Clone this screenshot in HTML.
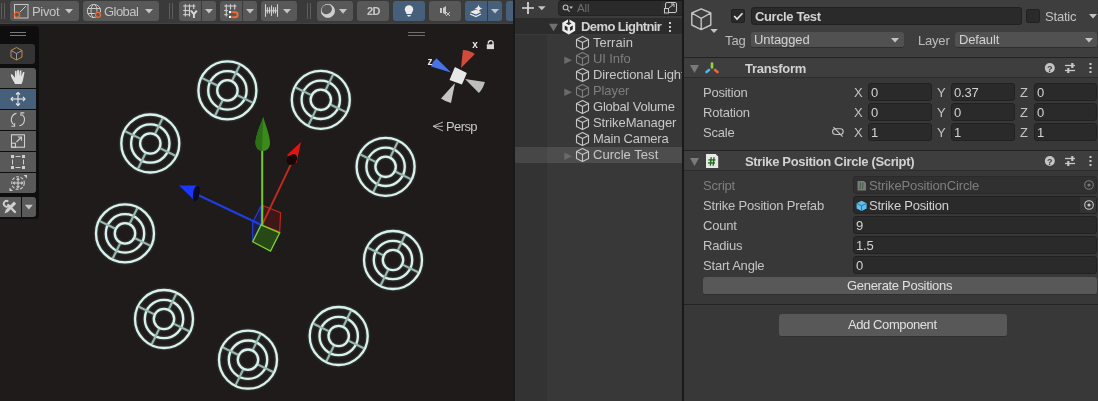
<!DOCTYPE html>
<html><head><meta charset="utf-8">
<style>
*{box-sizing:border-box;margin:0;padding:0}
html,body{width:1098px;height:401px;overflow:hidden;background:#191919;font-family:"Liberation Sans",sans-serif;font-size:13px;color:#c4c4c4}
.a{position:absolute}
.t{position:absolute;white-space:nowrap;line-height:1;will-change:transform}
#scene{left:0;top:0;width:513px;height:401px;background:#1e1b1a;overflow:hidden}
#stb{left:0;top:0;width:513px;height:24px;background:#3a3a3a;border-bottom:1px solid #414141}
.btn{position:absolute;top:1px;height:20px;background:#585858;border-radius:3px}
.blue{background:#46607c}
#hier{left:515px;top:0;width:167px;height:401px;background:#383838;overflow:hidden}
#insp{left:684px;top:0;width:414px;height:401px;background:#383838;overflow:hidden}
svg.a{will-change:transform}
.fld{position:absolute;background:#2a2a2a;border:1px solid #212121;border-radius:3px}
</style></head><body>
<div id="scene" class="a">
<svg class="a" style="left:0;top:0" width="513" height="401" viewBox="0 0 513 401">
<defs><style>.rg{fill:none;stroke:#d8f3ee;stroke-width:2.3}.sp{stroke:#98b9b3;stroke-width:2.1}</style>
<filter id="gl" x="-10%" y="-10%" width="120%" height="120%"><feGaussianBlur stdDeviation="1.2"/></filter></defs>
<g filter="url(#gl)" opacity="0.35"><g transform="translate(227.4,90.4)"><circle r="29" class="rg"/><circle r="19.2" class="rg"/><circle r="10.2" class="rg"/><line x1="4.91" y1="-10.07" x2="12.27" y2="-25.17" class="sp"/><line x1="10.07" y1="4.91" x2="25.17" y2="12.27" class="sp"/><line x1="-4.91" y1="10.07" x2="-12.27" y2="25.17" class="sp"/><line x1="-10.07" y1="-4.91" x2="-25.17" y2="-12.27" class="sp"/></g><g transform="translate(320.8,99.8)"><circle r="29" class="rg"/><circle r="19.2" class="rg"/><circle r="10.2" class="rg"/><line x1="4.91" y1="-10.07" x2="12.27" y2="-25.17" class="sp"/><line x1="10.07" y1="4.91" x2="25.17" y2="12.27" class="sp"/><line x1="-4.91" y1="10.07" x2="-12.27" y2="25.17" class="sp"/><line x1="-10.07" y1="-4.91" x2="-25.17" y2="-12.27" class="sp"/></g><g transform="translate(150.3,143.5)"><circle r="29" class="rg"/><circle r="19.2" class="rg"/><circle r="10.2" class="rg"/><line x1="4.91" y1="-10.07" x2="12.27" y2="-25.17" class="sp"/><line x1="10.07" y1="4.91" x2="25.17" y2="12.27" class="sp"/><line x1="-4.91" y1="10.07" x2="-12.27" y2="25.17" class="sp"/><line x1="-10.07" y1="-4.91" x2="-25.17" y2="-12.27" class="sp"/></g><g transform="translate(385.6,166.8)"><circle r="29" class="rg"/><circle r="19.2" class="rg"/><circle r="10.2" class="rg"/><line x1="4.91" y1="-10.07" x2="12.27" y2="-25.17" class="sp"/><line x1="10.07" y1="4.91" x2="25.17" y2="12.27" class="sp"/><line x1="-4.91" y1="10.07" x2="-12.27" y2="25.17" class="sp"/><line x1="-10.07" y1="-4.91" x2="-25.17" y2="-12.27" class="sp"/></g><g transform="translate(125,233.4)"><circle r="29" class="rg"/><circle r="19.2" class="rg"/><circle r="10.2" class="rg"/><line x1="4.91" y1="-10.07" x2="12.27" y2="-25.17" class="sp"/><line x1="10.07" y1="4.91" x2="25.17" y2="12.27" class="sp"/><line x1="-4.91" y1="10.07" x2="-12.27" y2="25.17" class="sp"/><line x1="-10.07" y1="-4.91" x2="-25.17" y2="-12.27" class="sp"/></g><g transform="translate(393,260)"><circle r="29" class="rg"/><circle r="19.2" class="rg"/><circle r="10.2" class="rg"/><line x1="4.91" y1="-10.07" x2="12.27" y2="-25.17" class="sp"/><line x1="10.07" y1="4.91" x2="25.17" y2="12.27" class="sp"/><line x1="-4.91" y1="10.07" x2="-12.27" y2="25.17" class="sp"/><line x1="-10.07" y1="-4.91" x2="-25.17" y2="-12.27" class="sp"/></g><g transform="translate(164,319)"><circle r="29" class="rg"/><circle r="19.2" class="rg"/><circle r="10.2" class="rg"/><line x1="4.91" y1="-10.07" x2="12.27" y2="-25.17" class="sp"/><line x1="10.07" y1="4.91" x2="25.17" y2="12.27" class="sp"/><line x1="-4.91" y1="10.07" x2="-12.27" y2="25.17" class="sp"/><line x1="-10.07" y1="-4.91" x2="-25.17" y2="-12.27" class="sp"/></g><g transform="translate(338.7,336)"><circle r="29" class="rg"/><circle r="19.2" class="rg"/><circle r="10.2" class="rg"/><line x1="4.91" y1="-10.07" x2="12.27" y2="-25.17" class="sp"/><line x1="10.07" y1="4.91" x2="25.17" y2="12.27" class="sp"/><line x1="-4.91" y1="10.07" x2="-12.27" y2="25.17" class="sp"/><line x1="-10.07" y1="-4.91" x2="-25.17" y2="-12.27" class="sp"/></g><g transform="translate(248,359.7)"><circle r="29" class="rg"/><circle r="19.2" class="rg"/><circle r="10.2" class="rg"/><line x1="4.91" y1="-10.07" x2="12.27" y2="-25.17" class="sp"/><line x1="10.07" y1="4.91" x2="25.17" y2="12.27" class="sp"/><line x1="-4.91" y1="10.07" x2="-12.27" y2="25.17" class="sp"/><line x1="-10.07" y1="-4.91" x2="-25.17" y2="-12.27" class="sp"/></g></g>
<g><g transform="translate(227.4,90.4)"><circle r="29" class="rg"/><circle r="19.2" class="rg"/><circle r="10.2" class="rg"/><line x1="4.91" y1="-10.07" x2="12.27" y2="-25.17" class="sp"/><line x1="10.07" y1="4.91" x2="25.17" y2="12.27" class="sp"/><line x1="-4.91" y1="10.07" x2="-12.27" y2="25.17" class="sp"/><line x1="-10.07" y1="-4.91" x2="-25.17" y2="-12.27" class="sp"/></g><g transform="translate(320.8,99.8)"><circle r="29" class="rg"/><circle r="19.2" class="rg"/><circle r="10.2" class="rg"/><line x1="4.91" y1="-10.07" x2="12.27" y2="-25.17" class="sp"/><line x1="10.07" y1="4.91" x2="25.17" y2="12.27" class="sp"/><line x1="-4.91" y1="10.07" x2="-12.27" y2="25.17" class="sp"/><line x1="-10.07" y1="-4.91" x2="-25.17" y2="-12.27" class="sp"/></g><g transform="translate(150.3,143.5)"><circle r="29" class="rg"/><circle r="19.2" class="rg"/><circle r="10.2" class="rg"/><line x1="4.91" y1="-10.07" x2="12.27" y2="-25.17" class="sp"/><line x1="10.07" y1="4.91" x2="25.17" y2="12.27" class="sp"/><line x1="-4.91" y1="10.07" x2="-12.27" y2="25.17" class="sp"/><line x1="-10.07" y1="-4.91" x2="-25.17" y2="-12.27" class="sp"/></g><g transform="translate(385.6,166.8)"><circle r="29" class="rg"/><circle r="19.2" class="rg"/><circle r="10.2" class="rg"/><line x1="4.91" y1="-10.07" x2="12.27" y2="-25.17" class="sp"/><line x1="10.07" y1="4.91" x2="25.17" y2="12.27" class="sp"/><line x1="-4.91" y1="10.07" x2="-12.27" y2="25.17" class="sp"/><line x1="-10.07" y1="-4.91" x2="-25.17" y2="-12.27" class="sp"/></g><g transform="translate(125,233.4)"><circle r="29" class="rg"/><circle r="19.2" class="rg"/><circle r="10.2" class="rg"/><line x1="4.91" y1="-10.07" x2="12.27" y2="-25.17" class="sp"/><line x1="10.07" y1="4.91" x2="25.17" y2="12.27" class="sp"/><line x1="-4.91" y1="10.07" x2="-12.27" y2="25.17" class="sp"/><line x1="-10.07" y1="-4.91" x2="-25.17" y2="-12.27" class="sp"/></g><g transform="translate(393,260)"><circle r="29" class="rg"/><circle r="19.2" class="rg"/><circle r="10.2" class="rg"/><line x1="4.91" y1="-10.07" x2="12.27" y2="-25.17" class="sp"/><line x1="10.07" y1="4.91" x2="25.17" y2="12.27" class="sp"/><line x1="-4.91" y1="10.07" x2="-12.27" y2="25.17" class="sp"/><line x1="-10.07" y1="-4.91" x2="-25.17" y2="-12.27" class="sp"/></g><g transform="translate(164,319)"><circle r="29" class="rg"/><circle r="19.2" class="rg"/><circle r="10.2" class="rg"/><line x1="4.91" y1="-10.07" x2="12.27" y2="-25.17" class="sp"/><line x1="10.07" y1="4.91" x2="25.17" y2="12.27" class="sp"/><line x1="-4.91" y1="10.07" x2="-12.27" y2="25.17" class="sp"/><line x1="-10.07" y1="-4.91" x2="-25.17" y2="-12.27" class="sp"/></g><g transform="translate(338.7,336)"><circle r="29" class="rg"/><circle r="19.2" class="rg"/><circle r="10.2" class="rg"/><line x1="4.91" y1="-10.07" x2="12.27" y2="-25.17" class="sp"/><line x1="10.07" y1="4.91" x2="25.17" y2="12.27" class="sp"/><line x1="-4.91" y1="10.07" x2="-12.27" y2="25.17" class="sp"/><line x1="-10.07" y1="-4.91" x2="-25.17" y2="-12.27" class="sp"/></g><g transform="translate(248,359.7)"><circle r="29" class="rg"/><circle r="19.2" class="rg"/><circle r="10.2" class="rg"/><line x1="4.91" y1="-10.07" x2="12.27" y2="-25.17" class="sp"/><line x1="10.07" y1="4.91" x2="25.17" y2="12.27" class="sp"/><line x1="-4.91" y1="10.07" x2="-12.27" y2="25.17" class="sp"/><line x1="-10.07" y1="-4.91" x2="-25.17" y2="-12.27" class="sp"/></g></g>
<path d="M261.2 205.7 L261.2 224.9 L252.7 241.8 L252.7 222.3 Z" fill="rgba(30,40,140,0.35)" stroke="#2a3cd8" stroke-width="1.2"/>
<path d="M263.2 205.7 L280.6 212.7 L279.7 231.9 L261.4 224.9 Z" fill="rgba(120,20,20,0.35)" stroke="#c42222" stroke-width="1.2"/>
<line x1="261.5" y1="225" x2="198" y2="195" stroke="#1e3ee0" stroke-width="2.3"/>
<line x1="262" y1="225" x2="292" y2="162" stroke="#c52a1e" stroke-width="1.8"/>
<line x1="262.2" y1="225" x2="262.2" y2="150" stroke="#74cc26" stroke-width="2"/>
<path d="M261.1 224.9 L279.7 232.8 L270.5 251.1 L252.7 241.8 Z" fill="rgba(50,110,20,0.55)" stroke="#7cd22c" stroke-width="1.3"/>
<path d="M263.2 117 C266 126 270 136 270 143 C270 148 267 151 263 151 C259 151 255.5 148 255.5 143 C255.5 136 260 126 263.2 117 Z" fill="#3a8a1c"/>
<path d="M263.2 117 C260 126 255.5 136 255.5 143 C255.5 148 259 151 262 151 Z" fill="#2d6f16"/>
<path d="M301 142 L296.5 163 L287 155 Z" fill="#e01414"/>
<ellipse cx="292" cy="159.5" rx="4.6" ry="6" transform="rotate(40 292 159.5)" fill="#1a0606"/>
<path d="M179 185.4 L198.5 185.5 L195 201 Z" fill="#1838ff"/>
<ellipse cx="196.3" cy="193.3" rx="3.2" ry="8" transform="rotate(10 196.3 193.3)" fill="#070a24"/>
<path d="M461 68 L462.9 50 Q469 50 474.9 54 Z" fill="#d24a3a"/>
<path d="M451 72.5 L436.5 58.3 Q432.5 61.5 431 66.5 Z" fill="#4a72e6"/>
<path d="M465 79 L484.9 82 Q483 89 478.9 92.9 Z" fill="#bdbdbd"/>
<path d="M455 83 L441 98.5 Q446 102 451 102.9 Z" fill="#c4c4c4"/>
<path d="M454.9 66.9 L466.9 72.9 L461.9 84.5 L449.5 79.9 Z" fill="#e8e8e8"/>
<text x="472.2" y="48" font-family="Liberation Sans" font-weight="bold" font-size="10" fill="#e8e8e8">x</text>
<text x="427.4" y="64.6" font-family="Liberation Sans" font-weight="bold" font-size="10" fill="#e8e8e8">z</text>
<path d="M488.4 43.6 A2.4 2.4 0 0 1 493.1 42.6 L493.1 45" fill="none" stroke="#d8d8d8" stroke-width="1.4"/>
<rect x="486.8" y="44.3" width="7.2" height="4.8" fill="#d8d8d8"/>
<path d="M443 122 L433 126.3 L443 131 M433 126.3 L443 126.3" fill="none" stroke="#c8c8c8" stroke-width="0.9"/>
<line x1="408" y1="32.5" x2="425" y2="32.5" stroke="#6e6e6e" stroke-width="1"/>
<line x1="408" y1="35.5" x2="425" y2="35.5" stroke="#6e6e6e" stroke-width="1"/>
</svg>
<div class="t" style="left:446.00px;top:119.80px;font-size:13px;letter-spacing:-0.6px;color:#c8c8c8;">Persp</div>
<div class="a" style="left:0;top:26px;width:39px;height:193px;background:#0e0e0e;border-radius:0 4px 4px 0"></div>
<div class="a" style="left:10px;top:32px;width:16px;height:1px;background:#7a7a7a"></div>
<div class="a" style="left:10px;top:35px;width:16px;height:1px;background:#7a7a7a"></div>
<div class="a" style="left:0;top:44px;width:35px;height:20px;background:#343434;border-radius:0 3px 3px 0"></div>
<div class="a" style="left:0;top:68px;width:36px;height:20px;background:#595959;border-radius:0 3px 0 0"></div>
<div class="a" style="left:0;top:89px;width:36px;height:20px;background:#46607c"></div>
<div class="a" style="left:0;top:110px;width:36px;height:20px;background:#595959"></div>
<div class="a" style="left:0;top:131px;width:36px;height:20px;background:#595959"></div>
<div class="a" style="left:0;top:152px;width:36px;height:20px;background:#595959"></div>
<div class="a" style="left:0;top:173px;width:36px;height:20px;background:#595959;border-radius:0 0 3px 0"></div>
<div class="a" style="left:0;top:197px;width:21px;height:20px;background:#595959"></div>
<div class="a" style="left:22px;top:197px;width:14px;height:20px;background:#595959;border-radius:0 3px 3px 0"></div>
<svg class="a" style="left:0;top:0" width="40" height="220" viewBox="0 0 40 220">
  <path d="M16.5 47.5 L22 50.5 L22 57 L16.5 60 L11 57 L11 50.5 Z" fill="none" stroke="#c28a4a" stroke-width="1"/>
  <path d="M11 50.5 L16.5 53.5 L22 50.5 M16.5 53.5 L16.5 60" fill="none" stroke="#9a9a9a" stroke-width="1"/>
  <g transform="translate(10.8 69.5) scale(1.3 1.05) translate(-10.3 -69.6)">
  <path d="M13 82 C11.5 79 10.5 76.5 10.3 75 C10.2 74 11.3 73.8 11.8 74.8 L13.5 77.5 L13.5 71.5 C13.5 70.5 14.8 70.5 14.8 71.5 L14.9 76 L15.2 70.6 C15.2 69.6 16.6 69.6 16.6 70.6 L16.7 76 L17.2 71 C17.3 70 18.6 70.1 18.5 71.1 L18.4 76.3 L19.5 72.5 C19.7 71.6 21 71.9 20.8 72.8 L19.8 79 C19.5 81 19 82.5 18.5 83.5 L13.5 83.5 Z" fill="#e0e0e0"/>
  </g>
  <g stroke="#e8e8e8" stroke-width="1.1" fill="none">
    <line x1="18" y1="92.5" x2="18" y2="105.5"/><line x1="11" y1="99" x2="25" y2="99"/>
    <path d="M16 94.5 L18 92.5 L20 94.5 M16 103.5 L18 105.5 L20 103.5 M13 97 L11 99 L13 101 M23 97 L25 99 L23 101"/>
  </g>
  <g stroke="#cfcfcf" stroke-width="1.1" fill="none">
    <path d="M16.5 113.4 A6.3 6.3 0 0 0 13.8 124.6"/><path d="M19.3 125.8 A6.3 6.3 0 0 0 22 114.6"/>
    <path d="M11.3 126.3 L14.6 126.3 L14.6 123.2"/><path d="M24.3 112.9 L21 112.9 L21 116"/>
  </g>
  <g stroke="#cfcfcf" stroke-width="1.1" fill="none">
    <rect x="11.5" y="134.8" width="13" height="12.4"/>
    <rect x="11.5" y="143.2" width="4" height="4"/>
    <path d="M16.5 142 L21.5 137 M17.8 137 L21.5 137 L21.5 140.7"/>
  </g>
  <g fill="#cfcfcf">
    <rect x="11" y="155" width="3" height="3"/><rect x="22" y="155" width="3" height="3"/>
    <rect x="11" y="166" width="3" height="3"/><rect x="22" y="166" width="3" height="3"/>
  </g>
  <g stroke="#cfcfcf" stroke-width="1" fill="none">
    <line x1="12.5" y1="159.5" x2="12.5" y2="164.5"/><line x1="23.5" y1="159.5" x2="23.5" y2="164.5"/>
    <line x1="15.5" y1="156.5" x2="20.5" y2="156.5"/><line x1="15.5" y1="167.5" x2="20.5" y2="167.5"/>
  </g>
  <g stroke="#cfcfcf" stroke-width="1.1" fill="none">
    <circle cx="18" cy="183" r="6.3" stroke-dasharray="3 1.5"/>
    <line x1="18" y1="178.5" x2="18" y2="187.5"/><line x1="13.5" y1="183" x2="22.5" y2="183"/>
    <path d="M16.6 179.8 L18 178.4 L19.4 179.8 M16.6 186.2 L18 187.6 L19.4 186.2 M14.8 181.6 L13.4 183 L14.8 184.4 M21.2 181.6 L22.6 183 L21.2 184.4"/>
  </g>
  <path d="M23.5 175 L27 175 L27 178.5 Z M9.5 191 L13 191 L9.5 187.5 Z" fill="#cfcfcf"/>
  <path d="M8.3 201.4 A2.9 2.9 0 1 0 8.9 205.6" fill="none" stroke="#d0d0d0" stroke-width="1.8"/>
  <line x1="8.2" y1="205.2" x2="15" y2="212" stroke="#d0d0d0" stroke-width="2.4" stroke-linecap="round"/>
  <path d="M14 201.6 L16.2 203.8 L8 212 L4.6 213.4 L5.8 209.8 Z" fill="#d0d0d0"/>
  <path d="M24.8 204.7 L32.9 204.7 L28.85 209.5 Z" fill="#c4c4c4"/>
</svg>
<div id="stb" class="a">
    <div class="a" style="left:1px;top:3px;width:1px;height:16px;background:#5e5e5e"></div>
    <div class="a" style="left:4px;top:3px;width:1px;height:16px;background:#5e5e5e"></div>
    <div class="btn" style="left:10px;width:69px"></div>
    <svg class="a" style="left:10px;top:0" width="69" height="22" viewBox="10 0 69 22">
      <rect x="14.5" y="4.5" width="13.5" height="13.5" fill="none" stroke="#c8c8c8" stroke-width="1"/>
      <line x1="20" y1="12" x2="26" y2="6" stroke="#c8c8c8" stroke-width="1"/>
      <circle cx="17" cy="14.8" r="2.6" fill="#585858" stroke="#f26b2b" stroke-width="1.3"/>
      <path d="M65 9 L73 9 L69 13.5 Z" fill="#c4c4c4"/>
    </svg>
    <div class="t" style="left:32.00px;top:4.90px;font-size:13px;letter-spacing:-0.32px;color:#c4c4c4;">Pivot</div>
    <div class="btn" style="left:83px;width:76px"></div>
    <svg class="a" style="left:83px;top:0" width="76" height="22" viewBox="83 0 76 22">
      <circle cx="94" cy="11" r="6.6" fill="none" stroke="#c8c8c8" stroke-width="1"/>
      <ellipse cx="94" cy="11" rx="3" ry="6.6" fill="none" stroke="#c8c8c8" stroke-width="1"/>
      <line x1="87.5" y1="8.5" x2="100.5" y2="8.5" stroke="#c8c8c8" stroke-width="1"/>
      <line x1="87.5" y1="13.5" x2="100.5" y2="13.5" stroke="#c8c8c8" stroke-width="1"/>
      <circle cx="98" cy="14.8" r="3.4" fill="#585858"/>
      <circle cx="98" cy="14.8" r="2.5" fill="#585858" stroke="#f26b2b" stroke-width="1.3"/>
      <path d="M145 9 L153 9 L149 13.5 Z" fill="#c4c4c4"/>
    </svg>
    <div class="t" style="left:104.00px;top:4.90px;font-size:13px;letter-spacing:-0.54px;color:#c4c4c4;">Global</div>
    <div class="a" style="left:169px;top:3px;width:1px;height:16px;background:#5e5e5e"></div>
    <div class="a" style="left:172px;top:3px;width:1px;height:16px;background:#5e5e5e"></div>
    <div class="btn" style="left:179px;width:37px"></div>
    <div class="a" style="left:201px;top:1px;width:1px;height:20px;background:#3a3a3a"></div>
    <svg class="a" style="left:179px;top:0" width="37" height="22" viewBox="179 0 37 22">
      <g stroke="#d0d0d0" stroke-width="1.1" fill="none">
        <line x1="185.3" y1="4.2" x2="185.3" y2="16.5"/>
        <line x1="189.5" y1="4.2" x2="189.5" y2="16.5"/>
        <line x1="193.7" y1="4.2" x2="193.7" y2="9"/>
        <line x1="183.2" y1="6" x2="195.4" y2="6"/>
        <line x1="183.2" y1="10.5" x2="190.3" y2="10.5"/>
        <line x1="183.2" y1="14.7" x2="190.3" y2="14.7"/>
      </g>
      <path d="M191 10.6 L193.9 14.2 L196.8 10.6 M193.9 14 L193.9 18" fill="none" stroke="#d8d8d8" stroke-width="1.9"/>
      <path d="M205 9 L213 9 L209 13.5 Z" fill="#c4c4c4"/>
    </svg>
    <div class="btn" style="left:220px;width:37px"></div>
    <div class="a" style="left:242px;top:1px;width:1px;height:20px;background:#3a3a3a"></div>
    <svg class="a" style="left:220px;top:0" width="37" height="22" viewBox="220 0 37 22">
      <g stroke="#d0d0d0" stroke-width="1.1" fill="none">
        <line x1="226.3" y1="4.2" x2="226.3" y2="16.5"/>
        <line x1="230.5" y1="4.2" x2="230.5" y2="9.5"/>
        <line x1="234.7" y1="4.2" x2="234.7" y2="9.5"/>
        <line x1="224.2" y1="6" x2="236.4" y2="6"/>
        <line x1="224.2" y1="10.5" x2="227.8" y2="10.5"/>
        <line x1="224.2" y1="14.7" x2="227.8" y2="14.7"/>
      </g>
      <rect x="229" y="11" width="2.2" height="2.1" fill="#fff"/>
      <rect x="229" y="15.9" width="2.2" height="2.1" fill="#fff"/>
      <path d="M232.2 12.3 L235.2 12.3 A2.45 2.45 0 0 1 235.2 17.2 L232.2 17.2" fill="none" stroke="#f26b2b" stroke-width="2"/>
      <path d="M246 9 L254 9 L250 13.5 Z" fill="#c4c4c4"/>
    </svg>
    <div class="btn" style="left:261px;width:36px"></div>
    <svg class="a" style="left:261px;top:0" width="36" height="22" viewBox="261 0 36 22">
      <g stroke="#d0d0d0" stroke-width="1.1" fill="none">
        <line x1="265.5" y1="4.2" x2="265.5" y2="16.8"/>
        <line x1="277.5" y1="4.2" x2="277.5" y2="16.8"/>
        <line x1="265.5" y1="10.8" x2="277.5" y2="10.8"/>
        <line x1="267.4" y1="7.2" x2="267.4" y2="13.5"/>
        <line x1="269.5" y1="7.2" x2="269.5" y2="13.5"/>
        <line x1="271.5" y1="5.4" x2="271.5" y2="15.9"/>
        <line x1="273.5" y1="7.2" x2="273.5" y2="13.5"/>
        <line x1="275.5" y1="7.2" x2="275.5" y2="13.5"/>
      </g>
      <path d="M283 9 L291 9 L287 13.5 Z" fill="#c4c4c4"/>
    </svg>
    <div class="a" style="left:307px;top:3px;width:1px;height:16px;background:#5e5e5e"></div>
    <div class="a" style="left:310px;top:3px;width:1px;height:16px;background:#5e5e5e"></div>
    <div class="btn" style="left:317px;width:36px"></div>
    <svg class="a" style="left:317px;top:0" width="36" height="22" viewBox="317 0 36 22">
      <circle cx="327.9" cy="10.9" r="6.9" fill="#cfcfcf"/>
      <circle cx="327.9" cy="10.9" r="6.3" fill="none" stroke="#cfcfcf" stroke-width="1"/>
      <ellipse cx="326.8" cy="9.4" rx="5.3" ry="4.6" transform="rotate(-25 326.8 9.4)" fill="#585858"/>
      <path d="M339 9 L347 9 L343 13.8 Z" fill="#c4c4c4"/>
    </svg>
    <div class="btn" style="left:357px;width:32px"></div>
    <div class="t" style="left:366.60px;top:5.59px;font-size:11px;font-weight:bold;letter-spacing:-0.7px;color:#c8c8c8;">2D</div>
    <div class="btn blue" style="left:393px;width:32px"></div>
    <svg class="a" style="left:393px;top:0" width="32" height="22" viewBox="393 0 32 22">
      <circle cx="409" cy="9.5" r="4.2" fill="#ececec"/>
      <path d="M406 12 L412 12 L411.5 14 L406.5 14 Z" fill="#ececec"/>
      <path d="M407 15 L411 15 L410 16.5 L408 16.5 Z" fill="#ececec"/>
    </svg>
    <div class="btn" style="left:429px;width:32px"></div>
    <svg class="a" style="left:429px;top:0" width="32" height="22" viewBox="429 0 32 22">
      <rect x="440" y="8" width="2" height="5" fill="#c8c8c8"/>
      <path d="M443 8 L446 6 L446 15 L443 13 Z" fill="#c8c8c8"/>
      <path d="M446 12 L450 16 M450 12 L446 16" stroke="#c8c8c8" stroke-width="1"/>
    </svg>
    <div class="btn blue" style="left:465px;width:37px"></div>
    <div class="a" style="left:487px;top:1px;width:1px;height:20px;background:#3a3a3a"></div>
    <svg class="a" style="left:465px;top:0" width="37" height="22" viewBox="465 0 37 22">
      <path d="M470 12 L476 9.5 L481 12 L476 14.5 Z" fill="#ececec"/>
      <path d="M470 14 L476 16.5 L481 14" fill="none" stroke="#ececec" stroke-width="1.3"/>
      <path d="M478.5 4.5 Q479 8 482.5 8.5 Q479 9 478.5 12.5 Q478 9 474.5 8.5 Q478 8 478.5 4.5 Z" fill="#ececec"/>
      <path d="M491 9 L499 9 L495 13.5 Z" fill="#c4c4c4"/>
    </svg>
    <div class="btn blue" style="left:506px;width:20px"></div>
  </div>
</div>
<div id="hier" class="a">

  <div class="a" style="left:0;top:0;width:167px;height:18px;background:#3c3c3c"></div>
  <div class="a" style="left:0;top:18px;width:167px;height:16px;background:#2c2c2c"></div>
  <div class="a" style="left:0;top:34px;width:167px;height:1px;background:#3a3a3a"></div>
  <div class="a" style="left:0;top:35px;width:32px;height:366px;background:#333333"></div>
  <div class="a" style="left:0;top:147px;width:32px;height:16px;background:#474747"></div>
  <div class="a" style="left:32px;top:147px;width:135px;height:16px;background:#4d4d4d"></div>
  <div class="fld" style="left:43px;top:0px;width:135px;height:16px;background:#2a2a2a;border-color:#171717 #232323 #232323 #232323;border-radius:4px"></div>
  <div class="a" style="left:146px;top:1px;width:17px;height:14px;background:#2e2e2e;border-radius:0 4px 4px 0"></div>
<div class="t" style="left:62.30px;top:2.57px;font-size:11.5px;letter-spacing:-0.1px;color:#6e6e6e;">All</div><div class="t" style="left:78.40px;top:36.10px;font-size:13px;letter-spacing:0.020000000000000004px;color:#c8c8c8;">Terrain</div><div class="t" style="left:78.40px;top:52.10px;font-size:13px;letter-spacing:-0.1px;color:#7e7e7e;">UI Info</div><div class="t" style="left:78.40px;top:68.10px;font-size:13px;letter-spacing:-0.1px;color:#c8c8c8;">Directional Light</div><div class="t" style="left:78.40px;top:84.10px;font-size:13px;letter-spacing:-0.1px;color:#7e7e7e;">Player</div><div class="t" style="left:78.40px;top:100.10px;font-size:13px;letter-spacing:-0.22px;color:#c8c8c8;">Global Volume</div><div class="t" style="left:78.40px;top:116.10px;font-size:13px;letter-spacing:-0.1px;color:#c8c8c8;">StrikeManager</div><div class="t" style="left:78.40px;top:132.10px;font-size:13px;letter-spacing:-0.24000000000000002px;color:#c8c8c8;">Main Camera</div><div class="t" style="left:78.40px;top:148.10px;font-size:13px;letter-spacing:0.05px;color:#c8c8c8;">Curcle Test</div><svg class="a" style="left:0;top:0" width="167" height="170" viewBox="515 0 167 170"><path d="M528 2 L528 14 M522 8 L534 8" stroke="#dcdcdc" stroke-width="1.7"/><path d="M538 6.2 L545.6 6.2 L541.8 10.2 Z" fill="#c4c4c4"/><circle cx="565.6" cy="7.4" r="2.4" fill="none" stroke="#bdbdbd" stroke-width="1.1"/><path d="M567.4 9.3 L569.6 11.6" stroke="#bdbdbd" stroke-width="1.2"/><path d="M569.3 6.6 L573 6.6 L571.15 9 Z" fill="#bdbdbd"/><rect x="665.5" y="2.5" width="11" height="10" rx="1.5" fill="none" stroke="#c8c8c8" stroke-width="1"/><rect x="664.5" y="8.5" width="4" height="4.5" fill="#2e2e2e" stroke="#c8c8c8" stroke-width="1"/><path d="M669 8 L674 4 M671 4 L674 4 L674 7" fill="none" stroke="#c8c8c8" stroke-width="1"/><path d="M549 23.7 L558 23.7 L553.5 31.2 Z" fill="#707070"/><path d="M568.75 20.5 L574 23.5 L574 30 L568.75 33 L563.5 30 L563.5 23.5 Z M563.5 23.5 L568.75 26.3 L574 23.5 M568.75 26.3 L568.75 33" fill="none" stroke="#ececec" stroke-width="2.4" stroke-linejoin="miter"/><path d="M568.75 19 L568.75 24.6" stroke="#2e2e2e" stroke-width="1.5"/><g fill="#cfcfcf"><rect x="669" y="22" width="2" height="2"/><rect x="669" y="26" width="2" height="2"/><rect x="669" y="30" width="2" height="2"/></g><path d="M582.5 36.5 L588.5 39.5 L588.5 46.5 L582.5 49.5 L576.5 46.5 L576.5 39.5 Z M576.5 39.5 L582.5 42.5 L588.5 39.5 M582.5 42.5 L582.5 49.5" fill="none" stroke="#c8c8c8" stroke-width="1.1" stroke-linejoin="round"/><path d="M582.5 52.5 L588.5 55.5 L588.5 62.5 L582.5 65.5 L576.5 62.5 L576.5 55.5 Z M576.5 55.5 L582.5 58.5 L588.5 55.5 M582.5 58.5 L582.5 65.5" fill="none" stroke="#7e7e7e" stroke-width="1.1" stroke-linejoin="round"/><path d="M564.3 56.5 L572 60.2 L564.3 63.9 Z" fill="#6a6a6a"/><path d="M582.5 68.5 L588.5 71.5 L588.5 78.5 L582.5 81.5 L576.5 78.5 L576.5 71.5 Z M576.5 71.5 L582.5 74.5 L588.5 71.5 M582.5 74.5 L582.5 81.5" fill="none" stroke="#c8c8c8" stroke-width="1.1" stroke-linejoin="round"/><path d="M582.5 84.5 L588.5 87.5 L588.5 94.5 L582.5 97.5 L576.5 94.5 L576.5 87.5 Z M576.5 87.5 L582.5 90.5 L588.5 87.5 M582.5 90.5 L582.5 97.5" fill="none" stroke="#7e7e7e" stroke-width="1.1" stroke-linejoin="round"/><path d="M564.3 88.5 L572 92.2 L564.3 95.9 Z" fill="#6a6a6a"/><path d="M582.5 100.5 L588.5 103.5 L588.5 110.5 L582.5 113.5 L576.5 110.5 L576.5 103.5 Z M576.5 103.5 L582.5 106.5 L588.5 103.5 M582.5 106.5 L582.5 113.5" fill="none" stroke="#c8c8c8" stroke-width="1.1" stroke-linejoin="round"/><path d="M582.5 116.5 L588.5 119.5 L588.5 126.5 L582.5 129.5 L576.5 126.5 L576.5 119.5 Z M576.5 119.5 L582.5 122.5 L588.5 119.5 M582.5 122.5 L582.5 129.5" fill="none" stroke="#c8c8c8" stroke-width="1.1" stroke-linejoin="round"/><path d="M582.5 132.5 L588.5 135.5 L588.5 142.5 L582.5 145.5 L576.5 142.5 L576.5 135.5 Z M576.5 135.5 L582.5 138.5 L588.5 135.5 M582.5 138.5 L582.5 145.5" fill="none" stroke="#c8c8c8" stroke-width="1.1" stroke-linejoin="round"/><path d="M582.5 148.5 L588.5 151.5 L588.5 158.5 L582.5 161.5 L576.5 158.5 L576.5 151.5 Z M576.5 151.5 L582.5 154.5 L588.5 151.5 M582.5 154.5 L582.5 161.5" fill="none" stroke="#c8c8c8" stroke-width="1.1" stroke-linejoin="round"/><path d="M564.3 152.5 L572 156.2 L564.3 159.9 Z" fill="#6a6a6a"/></svg><div class="t" style="left:65.60px;top:20.10px;font-size:13px;font-weight:bold;letter-spacing:-0.6px;color:#d2d2d2;">Demo Lightnir</div></div>
<div id="insp" class="a">
<div class="a" style="left:0;top:0;width:414px;height:57px;background:#3e3e3e"></div>
<div class="a" style="left:0;top:57px;width:414px;height:1px;background:#232323"></div>
<div class="a" style="left:0;top:58px;width:414px;height:20px;background:#3e3e3e;border-bottom:1px solid #2c2c2c"></div>
<div class="a" style="left:0;top:150px;width:414px;height:1px;background:#232323"></div>
<div class="a" style="left:0;top:151px;width:414px;height:20px;background:#3e3e3e;border-bottom:1px solid #2c2c2c"></div>
<div class="a" style="left:0;top:304px;width:414px;height:1px;background:#232323"></div>
<div class="fld" style="left:47px;top:9px;width:14px;height:14px;border-radius:2px"></div>
<div class="fld" style="left:67px;top:7px;width:271px;height:18px"></div>
<div class="t" style="left:70.50px;top:10.20px;font-size:13px;font-weight:bold;letter-spacing:-0.38px;color:#d2d2d2;">Curcle Test</div>
<div class="fld" style="left:342px;top:9px;width:14px;height:14px;border-radius:2px"></div>
<div class="t" style="left:360.60px;top:10.00px;font-size:13px;letter-spacing:-0.2px;color:#c4c4c4;">Static</div>
<div class="t" style="left:41.00px;top:33.85px;font-size:13px;letter-spacing:-0.12px;color:#bdbdbd;">Tag</div>
<div class="a" style="left:67px;top:32px;width:153px;height:16px;background:#515151;border-radius:3px;border-bottom:1px solid #2f2f2f"></div>
<div class="t" style="left:70.40px;top:32.90px;font-size:13px;letter-spacing:-0.11px;color:#d2d2d2;">Untagged</div>
<div class="t" style="left:234.40px;top:33.85px;font-size:13px;letter-spacing:-0.2px;color:#bdbdbd;">Layer</div>
<div class="a" style="left:271px;top:32px;width:142px;height:16px;background:#515151;border-radius:3px;border-bottom:1px solid #2f2f2f"></div>
<div class="t" style="left:274.60px;top:32.90px;font-size:13px;letter-spacing:-0.15px;color:#d2d2d2;">Default</div>
<div class="t" style="left:60.50px;top:61.90px;font-size:13px;font-weight:bold;letter-spacing:-0.29px;color:#d2d2d2;">Transform</div>
<div class="t" style="left:18.90px;top:86.00px;font-size:13px;letter-spacing:-0.23px;color:#c4c4c4;">Position</div>
<div class="t" style="left:170.20px;top:86.00px;font-size:13px;letter-spacing:0px;color:#c4c4c4;">X</div>
<div class="fld" style="left:184px;top:83px;width:64px;height:18px"></div>
<div class="t" style="left:187.30px;top:86.00px;font-size:13px;letter-spacing:-0.2px;color:#d2d2d2;">0</div>
<div class="t" style="left:253.20px;top:86.00px;font-size:13px;letter-spacing:0px;color:#c4c4c4;">Y</div>
<div class="fld" style="left:267px;top:83px;width:64px;height:18px"></div>
<div class="t" style="left:270.30px;top:86.00px;font-size:13px;letter-spacing:-0.2px;color:#d2d2d2;">0.37</div>
<div class="t" style="left:336.20px;top:86.00px;font-size:13px;letter-spacing:0px;color:#c4c4c4;">Z</div>
<div class="fld" style="left:350px;top:83px;width:63px;height:18px"></div>
<div class="t" style="left:353.30px;top:86.00px;font-size:13px;letter-spacing:-0.2px;color:#d2d2d2;">0</div>
<div class="t" style="left:18.90px;top:106.00px;font-size:13px;letter-spacing:-0.2px;color:#c4c4c4;">Rotation</div>
<div class="t" style="left:170.20px;top:106.00px;font-size:13px;letter-spacing:0px;color:#c4c4c4;">X</div>
<div class="fld" style="left:184px;top:103px;width:64px;height:18px"></div>
<div class="t" style="left:187.30px;top:106.00px;font-size:13px;letter-spacing:-0.2px;color:#d2d2d2;">0</div>
<div class="t" style="left:253.20px;top:106.00px;font-size:13px;letter-spacing:0px;color:#c4c4c4;">Y</div>
<div class="fld" style="left:267px;top:103px;width:64px;height:18px"></div>
<div class="t" style="left:270.30px;top:106.00px;font-size:13px;letter-spacing:-0.2px;color:#d2d2d2;">0</div>
<div class="t" style="left:336.20px;top:106.00px;font-size:13px;letter-spacing:0px;color:#c4c4c4;">Z</div>
<div class="fld" style="left:350px;top:103px;width:63px;height:18px"></div>
<div class="t" style="left:353.30px;top:106.00px;font-size:13px;letter-spacing:-0.2px;color:#d2d2d2;">0</div>
<div class="t" style="left:18.90px;top:126.00px;font-size:13px;letter-spacing:-0.2px;color:#c4c4c4;">Scale</div>
<div class="t" style="left:170.20px;top:126.00px;font-size:13px;letter-spacing:0px;color:#c4c4c4;">X</div>
<div class="fld" style="left:184px;top:123px;width:64px;height:18px"></div>
<div class="t" style="left:187.30px;top:126.00px;font-size:13px;letter-spacing:-0.2px;color:#d2d2d2;">1</div>
<div class="t" style="left:253.20px;top:126.00px;font-size:13px;letter-spacing:0px;color:#c4c4c4;">Y</div>
<div class="fld" style="left:267px;top:123px;width:64px;height:18px"></div>
<div class="t" style="left:270.30px;top:126.00px;font-size:13px;letter-spacing:-0.2px;color:#d2d2d2;">1</div>
<div class="t" style="left:336.20px;top:126.00px;font-size:13px;letter-spacing:0px;color:#c4c4c4;">Z</div>
<div class="fld" style="left:350px;top:123px;width:63px;height:18px"></div>
<div class="t" style="left:353.30px;top:126.00px;font-size:13px;letter-spacing:-0.2px;color:#d2d2d2;">1</div>
<div class="t" style="left:60.60px;top:155.10px;font-size:13px;font-weight:bold;letter-spacing:-0.345px;color:#d2d2d2;">Strike Position Circle (Script)</div>
<div class="t" style="left:18.90px;top:179.00px;font-size:13px;letter-spacing:-0.2px;color:#7f7f7f;">Script</div>
<div class="fld" style="left:169px;top:176px;width:244px;height:18px;background:#303030;border-color:#2a2a2a"></div>
<div class="t" style="left:185.40px;top:179.00px;font-size:13px;letter-spacing:-0.125px;color:#7f7f7f;">StrikePositionCircle</div>
<div class="t" style="left:18.90px;top:199.00px;font-size:13px;letter-spacing:-0.184px;color:#c4c4c4;">Strike Position Prefab</div>
<div class="fld" style="left:169px;top:196px;width:244px;height:18px"></div>
<div class="a" style="left:396px;top:197px;width:16px;height:16px;background:#333;border-radius:0 2px 2px 0"></div>
<div class="t" style="left:185.40px;top:199.00px;font-size:13px;letter-spacing:-0.22px;color:#d2d2d2;">Strike Position</div>
<div class="t" style="left:18.90px;top:219.00px;font-size:13px;letter-spacing:-0.2px;color:#c4c4c4;">Count</div>
<div class="fld" style="left:169px;top:216px;width:244px;height:18px"></div>
<div class="t" style="left:172.30px;top:219.00px;font-size:13px;letter-spacing:-0.2px;color:#d2d2d2;">9</div>
<div class="t" style="left:18.90px;top:239.00px;font-size:13px;letter-spacing:-0.2px;color:#c4c4c4;">Radius</div>
<div class="fld" style="left:169px;top:236px;width:244px;height:18px"></div>
<div class="t" style="left:172.30px;top:239.00px;font-size:13px;letter-spacing:-0.2px;color:#d2d2d2;">1.5</div>
<div class="t" style="left:18.90px;top:259.00px;font-size:13px;letter-spacing:-0.2px;color:#c4c4c4;">Start Angle</div>
<div class="fld" style="left:169px;top:256px;width:244px;height:18px"></div>
<div class="t" style="left:172.30px;top:259.00px;font-size:13px;letter-spacing:-0.2px;color:#d2d2d2;">0</div>
<div class="a" style="left:19px;top:277px;width:394px;height:18px;background:#585858;border-radius:3px;border-bottom:1px solid #2f2f2f"></div>
<div class="t" style="left:163.20px;top:279.30px;font-size:13px;letter-spacing:-0.3px;color:#e0e0e0;">Generate Positions</div>
<div class="a" style="left:95px;top:314px;width:228px;height:23px;background:#585858;border-radius:3px;border-bottom:1px solid #2f2f2f"></div>
<div class="t" style="left:164.20px;top:318.00px;font-size:13px;letter-spacing:-0.41px;color:#e0e0e0;">Add Component</div>
<svg class="a" style="left:0;top:0" width="414" height="401" viewBox="684 0 414 401"><path d="M701.2 8.8 L710.8 13 L710.8 25 L701.2 29.6 L691.8 25 L691.8 13 Z M691.8 13 L701.2 18.3 L710.8 13 M701.2 18.3 L701.2 29.6" fill="none" stroke="#c4c4c4" stroke-width="1.4" stroke-linejoin="round"/><path d="M710.3 29 L717.8 29 L714 33 Z" fill="#c4c4c4"/><path d="M734.2 16 L737 19 L742.5 13.2" fill="none" stroke="#e8e8e8" stroke-width="1.6"/><path d="M1089 14 L1097 14 L1093 18.5 Z" fill="#c4c4c4"/><path d="M891 38 L899 38 L895 42.5 Z" fill="#c4c4c4"/><path d="M1085 38 L1093 38 L1089 42.5 Z" fill="#c4c4c4"/><path d="M690 65 L699 65 L694.5 73 Z" fill="#7a7a7a"/><circle cx="1049.8" cy="68" r="5" fill="#c4c4c4"/><text x="1049.8" y="71.6" text-anchor="middle" font-family="Liberation Sans" font-weight="bold" font-size="9" fill="#3e3e3e">?</text><g stroke="#c8c8c8" stroke-width="1.3"><line x1="1065" y1="65.5" x2="1075" y2="65.5"/><line x1="1065" y1="70.5" x2="1075" y2="70.5"/></g><g fill="#c8c8c8"><rect x="1071.2" y="63" width="2.2" height="5"/><rect x="1067.2" y="68" width="2.2" height="5"/></g><g fill="#c8c8c8"><rect x="1089.5" y="63" width="2" height="2"/><rect x="1089.5" y="67" width="2" height="2"/><rect x="1089.5" y="71" width="2" height="2"/></g><path d="M690 158 L699 158 L694.5 166 Z" fill="#7a7a7a"/><circle cx="1049.8" cy="161" r="5" fill="#c4c4c4"/><text x="1049.8" y="164.6" text-anchor="middle" font-family="Liberation Sans" font-weight="bold" font-size="9" fill="#3e3e3e">?</text><g stroke="#c8c8c8" stroke-width="1.3"><line x1="1065" y1="158.5" x2="1075" y2="158.5"/><line x1="1065" y1="163.5" x2="1075" y2="163.5"/></g><g fill="#c8c8c8"><rect x="1071.2" y="156" width="2.2" height="5"/><rect x="1067.2" y="161" width="2.2" height="5"/></g><g fill="#c8c8c8"><rect x="1089.5" y="156" width="2" height="2"/><rect x="1089.5" y="160" width="2" height="2"/><rect x="1089.5" y="164" width="2" height="2"/></g><g stroke-linecap="round" stroke-width="2.6"><line x1="712" y1="63.5" x2="712" y2="67.5" stroke="#8fd63a"/><line x1="709" y1="70" x2="706.5" y2="72" stroke="#4fb8f0"/><line x1="715" y1="70" x2="717.5" y2="72" stroke="#f0683a"/></g><path d="M706 154 L715.6 154 L718.2 156.6 L718.2 168 L706 168 Z" fill="#e8e8e8"/><g stroke="#1f6e1f" stroke-width="1.4"><line x1="711.2" y1="157.2" x2="710.4" y2="165.8"/><line x1="714" y1="157.2" x2="713.2" y2="165.8"/><line x1="708.4" y1="159.9" x2="715.4" y2="159.9"/><line x1="708" y1="162.9" x2="715" y2="162.9"/></g><g fill="none" stroke="#c4c4c4" stroke-width="1.15"><rect x="832.6" y="128.7" width="10.6" height="5.8" rx="2.9"/><line x1="833.4" y1="127.2" x2="842.6" y2="136.6"/></g><path d="M857.5 181 L864 181 L866 183 L866 190.5 L857.5 190.5 Z" fill="#7a7a7a"/><g stroke="#3b5b3b" stroke-width="0.9"><line x1="860.5" y1="182.5" x2="860" y2="189"/><line x1="863" y1="182.5" x2="862.5" y2="189"/></g><path d="M861.6 200.8 L866.6 203.3 L866.6 208.5 L861.6 211 L856.6 208.5 L856.6 203.3 Z" fill="#5bc0f0"/><path d="M856.6 203.3 L861.6 205.8 L866.6 203.3 M861.6 205.8 L861.6 211" fill="none" stroke="#2a6d90" stroke-width="0.9"/><circle cx="1089" cy="185" r="4.3" fill="none" stroke="#7a7a7a" stroke-width="1.1"/><circle cx="1089" cy="185" r="1.6" fill="#7a7a7a"/><circle cx="1089" cy="205" r="4.3" fill="none" stroke="#c8c8c8" stroke-width="1.1"/><circle cx="1089" cy="205" r="1.6" fill="#c8c8c8"/></svg>
</div>
</body></html>
